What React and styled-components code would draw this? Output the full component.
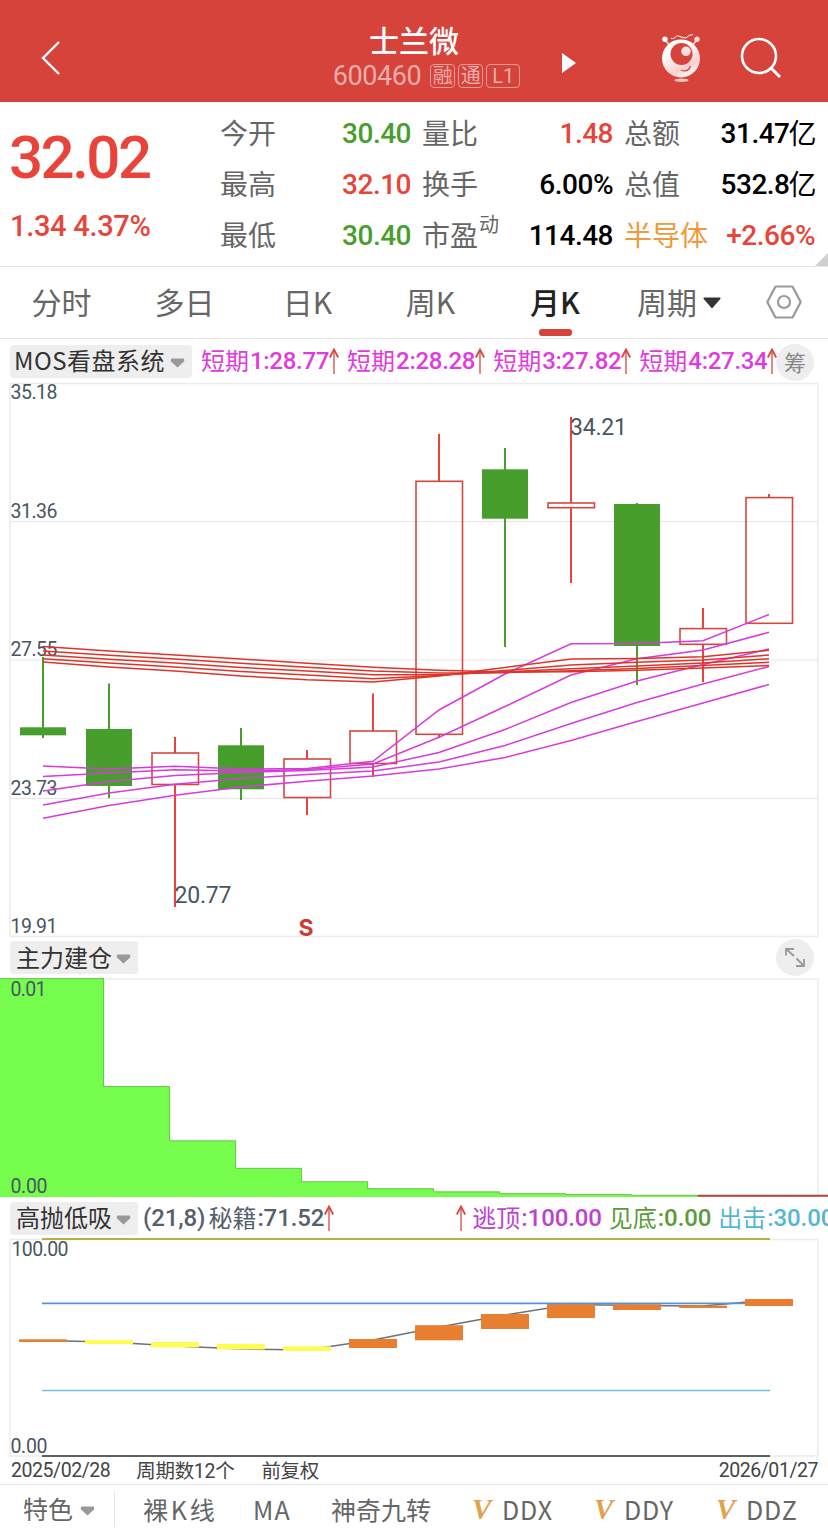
import styled, { createGlobalStyle } from 'styled-components';

const cjk = `'Noto Sans CJK SC', sans-serif`;
const din = `Roboto, 'Noto Sans CJK SC', sans-serif`;

const RED = '#e8443a';
const GREEN = '#479e2c';

const quotes = [
  [
    { label: '今开', value: '30.40', color: GREEN },
    { label: '最高', value: '32.10', color: RED },
    { label: '最低', value: '30.40', color: GREEN },
  ],
  [
    { label: '量比', value: '1.48', color: RED },
    { label: '换手', value: '6.00%' },
    { label: '市盈', sup: '动', value: '114.48' },
  ],
  [
    { label: '总额', value: '31.47', unit: '亿' },
    { label: '总值', value: '532.8', unit: '亿' },
    { label: '半导体', labelColor: '#ee9a3a', value: '+2.66%', color: RED },
  ],
];

const tabs = [
  { name: '分时', width: 123 },
  { name: '多日', width: 123 },
  { name: '日K', width: 123 },
  { name: '周K', width: 123 },
  { name: '月K', width: 126, active: true },
];

const shortTerm = [
  { name: '短期', value: '1:28.77' },
  { name: '短期', value: '2:28.28' },
  { name: '短期', value: '3:27.82' },
  { name: '短期', value: '4:27.34' },
];

// x of each monthly bar
const xs = [43, 109, 175, 241, 307, 373, 439, 505, 571, 637, 703, 769];

// high, body top, body bottom, low
const candles = [
  { up: false, y: [657, 727.3, 735.3, 738] },
  { up: false, y: [683.5, 729, 786, 798] },
  { up: true, y: [737, 753, 784.5, 907] },
  { up: false, y: [728, 745.3, 789.3, 800] },
  { up: true, y: [750, 759, 797.5, 815] },
  { up: true, y: [693.5, 731, 763.5, 777] },
  { up: true, y: [434, 481.3, 734.3, 738] },
  { up: false, y: [448, 469.3, 518.7, 647] },
  { up: true, y: [417, 503, 507.7, 583] },
  { up: false, y: [503, 504, 646, 685] },
  { up: true, y: [608, 628.6, 644.3, 682] },
  { up: true, y: [494, 497.6, 623.3, 623.3] },
];

const shortLines = [
  [766, 769, 766.3, 769, 768.5, 761.3, 710, 674, 643.7, 643.5, 640.7, 614.5],
  [776.5, 773, 769.7, 771, 769.5, 764, 737.3, 706.5, 675, 658.7, 650, 632.3],
  [791, 781.5, 775.5, 772.5, 770.5, 767, 752.5, 729.5, 702.5, 681, 664.5, 649],
  [805, 793, 784.3, 778.5, 774.5, 771, 762, 745.5, 723.5, 702.5, 684, 666.5],
  [818.3, 805.6, 795.2, 787, 781.3, 776, 769, 757.5, 740.5, 721.5, 703, 684.5],
];

const longLines = [
  [646.5, 651, 655, 659, 663.3, 667.3, 670.3, 672, 671.7, 670.3, 668, 665.5],
  [651, 655.3, 659, 663.3, 667.3, 671, 673, 672.7, 670.7, 668.5, 665.5, 662.3],
  [655, 659.3, 663, 667.5, 671, 674.8, 674.7, 672, 668.7, 666, 663, 658.8],
  [658.7, 663, 667, 671.5, 675, 678.7, 675.5, 670.5, 665, 662.3, 660, 655],
  [662, 667, 671, 676, 679.7, 681.9, 676, 667.5, 659, 658.5, 656.7, 650.3],
];

const volumes = [
  [0, 104, 978.3],
  [104, 66, 1086.3],
  [170, 66, 1140.6],
  [236, 66, 1168],
  [302, 66, 1181.5],
  [368, 66, 1188.4],
  [434, 66, 1191.6],
  [500, 66, 1193.4],
  [566, 66, 1194.3],
  [632, 66, 1195],
];

const blocks = [
  ['#e87f30', 1339.3, 1342],
  ['#fdfd55', 1340, 1344],
  ['#fdfd55', 1342, 1347.3],
  ['#fdfd55', 1344, 1349.5],
  ['#fdfd55', 1346.3, 1351],
  ['#e87f30', 1339, 1348],
  ['#e87f30', 1325.2, 1340.3],
  ['#e87f30', 1314, 1329],
  ['#e87f30', 1304, 1318],
  ['#e87f30', 1304.2, 1310],
  ['#e87f30', 1305.6, 1308],
  ['#e87f30', 1299, 1306],
];

const trend = [1340.5, 1342, 1346, 1349, 1350, 1340, 1327, 1315, 1304.5, 1305.5, 1306, 1300];

const toPoints = (ys) => ys.map((y, i) => `${xs[i]},${y}`).join(' ');

const GlobalStyle = createGlobalStyle`
  * {
    box-sizing: border-box;
  }
  body {
    margin: 0;
    background: #fff;
    font-family: ${cjk};
  }
`;

const Page = styled.div`
  width: 828px;
  height: 1530px;
  overflow: hidden;
  background: #fff;
  display: flex;
  flex-direction: column;
`;

const Header = styled.header`
  height: 102px;
  flex: none;
  display: flex;
  background: #d6433b;
  color: #fff;
`;

const HeaderIcon = styled.svg`
  display: block;
  flex: none;
  width: ${(p) => p.$w}px;
  height: ${(p) => p.$h}px;
  margin: ${(p) => p.$top}px 0 0 ${(p) => p.$left}px;
`;

const TitleBlock = styled.div`
  width: 288px;
  margin-left: 209px;
  display: flex;
  flex-direction: column;
  align-items: center;
`;

const Title = styled.div`
  margin-top: 20px;
  height: 38px;
  line-height: 38px;
  font-size: 30px;
  font-weight: 500;
`;

const CodeRow = styled.div`
  display: flex;
  align-items: center;
  height: 30px;
  margin-top: 3px;
  padding-left: 25px;
  color: #ebada9;
`;

const Code = styled.span`
  font-family: ${din};
  font-size: 27px;
  letter-spacing: -0.4px;
  margin-right: 9px;
`;

const Badge = styled.span`
  width: ${(p) => p.$w || 25}px;
  height: 24px;
  margin-right: ${(p) => (p.$last ? 0 : 3)}px;
  border: 1px solid #e79b96;
  border-radius: 4px;
  font-size: 20px;
  line-height: ${(p) => (p.$w ? 23 : 20)}px;
  text-align: center;
  font-family: ${(p) => (p.$w ? din : cjk)};
`;

const Quote = styled.section`
  position: relative;
  height: 165px;
  flex: none;
  display: flex;
  border-bottom: 1px solid #e6e6e6;
`;

const PriceBlock = styled.div`
  width: 220px;
  padding: 17px 0 0 9px;
  font-family: ${din};
  color: ${RED};
`;

const Price = styled.div`
  font-size: 60px;
  line-height: 78px;
  font-weight: 500;
  letter-spacing: -2.5px;
`;

const Change = styled.div`
  margin: 9px 0 0 1px;
  font-size: 29px;
  line-height: 40px;
  font-weight: 500;
  letter-spacing: -0.3px;
  white-space: pre;
`;

const QuoteColumn = styled.div`
  width: 191px;
  margin-right: 11px;
  padding-top: 6px;
`;

const QuoteItem = styled.div`
  height: 51px;
  display: flex;
  align-items: center;
  justify-content: space-between;
  white-space: nowrap;
`;

const QuoteLabel = styled.span`
  display: flex;
  margin-top: -4px;
  font-size: 28px;
  line-height: 50px;
  font-weight: 400;
  color: ${(p) => p.$color || '#666'};
`;

const Sup = styled.span`
  font-size: 20px;
  line-height: 30px;
  margin-left: 1px;
`;

const QuoteValue = styled.span`
  display: flex;
  align-items: center;
  font-family: ${din};
  font-size: 28px;
  line-height: 50px;
  font-weight: 500;
  letter-spacing: -0.5px;
  color: ${(p) => p.$color || '#000'};
`;

const Unit = styled.span`
  font-family: ${cjk};
  font-weight: 400;
  font-size: 28px;
  margin: -4px -1px 0 -1px;
`;

const Corner = styled.span`
  position: absolute;
  right: 0;
  bottom: 0;
  border-style: solid;
  border-width: 0 0 13px 13px;
  border-color: transparent transparent #cfcfcf transparent;
`;

const TabBar = styled.nav`
  height: 72px;
  flex: none;
  display: flex;
  border-bottom: 1px solid #e6e6e6;
`;

const Tab = styled.div`
  width: ${(p) => p.$w}px;
  display: flex;
  flex-direction: column;
  align-items: center;
  font-size: 30px;
  line-height: 68px;
  height: 71px;
  font-weight: ${(p) => (p.$active ? 500 : 400)};
  color: ${(p) => (p.$active ? '#222' : '#666')};
`;

const TabMark = styled.span`
  width: 33px;
  height: 7px;
  flex: none;
  margin-top: -6px;
  border-radius: 3px;
  background: #d6433b;
`;

const PeriodTab = styled.div`
  display: flex;
  align-items: center;
  width: 148px;
  padding-left: 19px;
  height: 68px;
  font-size: 30px;
  font-weight: 400;
  color: #666;
`;

const TabIcon = styled.svg`
  display: block;
  width: ${(p) => p.$w}px;
  height: ${(p) => p.$h}px;
  margin-left: ${(p) => p.$left || 0}px;
  margin-top: ${(p) => p.$top || 0}px;
`;

const IndicatorBar = styled.div`
  position: relative;
  height: ${(p) => p.$h}px;
  flex: none;
  display: flex;
  align-items: center;
  padding-left: 10px;
  overflow: hidden;
  white-space: nowrap;
`;

const Picker = styled.div`
  display: flex;
  align-items: center;
  flex: none;
  width: ${(p) => p.$w}px;
  height: 33px;
  padding-left: ${(p) => p.$pad || 6}px;
  border-radius: 4px;
  background: #eee;
  color: #333;
  font-size: 24px;
  line-height: 31px;
  font-weight: 400;
  letter-spacing: ${(p) => p.$ls || 0}px;
`;

const PickerText = styled.span`
  margin-top: -3px;
`;

const PickerArrow = styled.svg`
  display: block;
  width: 15px;
  height: 10px;
  margin: 3px 0 0 ${(p) => p.$left}px;
`;

const Reading = styled.span`
  display: flex;
  align-items: center;
  flex: none;
  margin-left: ${(p) => p.$left}px;
  font-size: 24px;
  line-height: 33px;
  color: ${(p) => p.$color};
`;

const Name = styled.span`
  font-family: ${cjk};
  font-weight: 400;
  margin: -3px 1px 0 ${(p) => p.$left || 0}px;
`;

const Num = styled.span`
  font-family: ${din};
  font-weight: 500;
  letter-spacing: ${(p) => p.$ls || -0.1}px;
`;

const ArrowUp = styled.svg`
  display: block;
  width: 10px;
  height: 26px;
`;

const RoundButton = styled.span`
  position: absolute;
  left: 776px;
  top: ${(p) => p.$top}px;
  width: 38px;
  height: 37px;
  display: flex;
  align-items: center;
  justify-content: center;
  border-radius: 50%;
  background: #eee;
  color: #888;
  font-size: 22px;
  line-height: 33px;
  padding-bottom: ${(p) => p.$pb || 0}px;
`;

const Chart = styled.svg`
  display: block;
  flex: none;
  width: 828px;
  height: ${(p) => p.$h}px;
  overflow: visible;
`;

const Axis = styled.text`
  font-family: ${din};
  font-size: ${(p) => p.$size || 19.5}px;
  font-weight: 400;
  fill: #485563;
`;

const Signal = styled.text`
  font-family: Inter, sans-serif;
  font-size: 23px;
  font-weight: 700;
  fill: #cc3c35;
`;

const DateRow = styled.div`
  height: 28px;
  flex: none;
  display: flex;
  align-items: center;
  padding: 0 10px 0 11px;
  font-family: ${din};
  font-size: 19.5px;
  font-weight: 400;
  color: #444;
  border-bottom: 1px solid #e6e6e6;
`;

const DateText = styled.span`
  letter-spacing: -0.45px;
  margin-left: ${(p) => p.$left || 0};
`;

const Note = styled.span`
  margin: -2px 0 0 ${(p) => p.$left}px;
  letter-spacing: -0.3px;
`;

const Footer = styled.footer`
  height: 45px;
  flex: none;
  display: flex;
  padding-top: 4px;
  font-size: 25px;
  line-height: 40px;
  font-weight: 400;
  color: #666;
  white-space: nowrap;
`;

const FootFirst = styled.div`
  display: flex;
  align-items: center;
  width: 115px;
  height: 36px;
  padding-left: 23px;
  border-right: 1px solid #e4e4e4;
  margin-top: 2px;
`;

const FootItem = styled.span`
  display: flex;
  margin-left: ${(p) => p.$left || 0}px;
  width: ${(p) => p.$w}px;
  letter-spacing: ${(p) => p.$ls || 0}px;
`;

const FootV = styled.span`
  width: 30px;
  font-family: 'Liberation Serif', serif;
  font-style: italic;
  font-weight: 700;
  font-size: 29px;
  letter-spacing: 0;
  color: #dfa34c;
`;

function Up() {
  return (
    <ArrowUp viewBox="0 0 10 26" fill="none" stroke="#d9473f">
      <path d="M5 1.5V26" strokeWidth="1.3" />
      <path d="M0.8 9.5L5 1.5L9.2 9.5" strokeWidth="1.8" />
    </ArrowUp>
  );
}

function Down({ left }) {
  return (
    <PickerArrow $left={left} viewBox="0 0 15 10">
      <path d="M1.5 0.5H13.5Q15 1.8 14 3.6L7.5 9.6L1 3.6Q0 1.8 1.5 0.5Z" fill="#999" />
    </PickerArrow>
  );
}

function Candle({ x, up, y }) {
  const [high, top, bottom, low] = y;
  if (!up) {
    return (
      <g fill="#479e2c" stroke="#479e2c">
        <path d={`M${x} ${high}V${low}`} strokeWidth="2" />
        <rect x={x - 23} y={top} width="46" height={bottom - top} stroke="none" />
      </g>
    );
  }
  return (
    <g fill="none">
      <path d={`M${x} ${high}V${top}M${x} ${bottom}V${low}`} stroke="#e8443c" strokeWidth="2" />
      <rect
        x={x - 23}
        y={top}
        width="46.5"
        height={bottom - top}
        stroke="#d6483f"
        strokeWidth="1.6"
      />
    </g>
  );
}

function HeaderBar() {
  return (
    <Header>
      <HeaderIcon $w={20} $h={36} $top={40} $left={41} viewBox="0 0 20 36">
        <path d="M18 2L2 18L18 34" fill="none" stroke="#fff" strokeWidth="2.4" />
      </HeaderIcon>
      <TitleBlock>
        <Title>士兰微</Title>
        <CodeRow>
          <Code>600460</Code>
          <Badge>融</Badge>
          <Badge>通</Badge>
          <Badge $w={34} $last>
            L1
          </Badge>
        </CodeRow>
      </TitleBlock>
      <HeaderIcon $w={14} $h={20} $top={53} $left={4} viewBox="0 0 14 20">
        <path d="M0 0L14 10L0 20Z" fill="#fff" />
      </HeaderIcon>
      <HeaderIcon $w={40} $h={50} $top={33} $left={85} viewBox="0 0 40 50">
        <defs>
          <linearGradient id="face" x1="0.2" y1="0" x2="0.7" y2="1">
            <stop offset="0.3" stopColor="#fff" />
            <stop offset="0.75" stopColor="#f8cfcd" />
            <stop offset="1" stopColor="#fff" />
          </linearGradient>
        </defs>
        <path d="M3.5 6L9 13M36.5 6L31 13" stroke="#fbe3e1" strokeWidth="1.4" />
        <circle cx="4" cy="6.2" r="2.7" fill="#fff" />
        <circle cx="36" cy="6.2" r="2.7" fill="#f9d9d7" />
        <path
          d="M10 5.5H13L16 2.5L20 4L25 5L28 2.5L32 1.5"
          fill="none"
          stroke="#fff"
          strokeWidth="1"
        />
        <circle cx="20" cy="25.4" r="19" fill="url(#face)" />
        <circle cx="20.5" cy="21" r="11" fill="#d6433b" />
        <circle cx="25" cy="18.3" r="4.8" fill="#fae0de" />
        <path d="M20 37.2Q27.5 39.5 29.5 33" fill="none" stroke="#d6433b" strokeWidth="1.2" />
        <ellipse cx="20.5" cy="47.3" rx="7" ry="1.7" fill="#f4bfbc" />
      </HeaderIcon>
      <HeaderIcon $w={42} $h={42} $top={37} $left={39} viewBox="0 0 42 42">
        <circle cx="19" cy="19" r="17" fill="none" stroke="#fff" strokeWidth="2.6" />
        <path d="M31 31L40 40" stroke="#fff" strokeWidth="3" />
      </HeaderIcon>
    </Header>
  );
}

export default function App() {
  return (
    <Page>
      <GlobalStyle />
      <HeaderBar />

      <Quote>
        <PriceBlock>
          <Price>32.02</Price>
          <Change>1.34 4.37%</Change>
        </PriceBlock>
        {quotes.map((column, i) => (
          <QuoteColumn key={i}>
            {column.map((item) => (
              <QuoteItem key={item.label}>
                <QuoteLabel $color={item.labelColor}>
                  {item.label}
                  {item.sup && <Sup>{item.sup}</Sup>}
                </QuoteLabel>
                <QuoteValue $color={item.color}>
                  {item.value}
                  {item.unit && <Unit>{item.unit}</Unit>}
                </QuoteValue>
              </QuoteItem>
            ))}
          </QuoteColumn>
        ))}
        <Corner />
      </Quote>

      <TabBar>
        {tabs.map((tab) => (
          <Tab key={tab.name} $w={tab.width} $active={tab.active}>
            {tab.name}
            {tab.active && <TabMark />}
          </Tab>
        ))}
        <PeriodTab>
          周期
          <TabIcon $w={18} $h={12} $left={6} $top={3} viewBox="0 0 18 12">
            <path d="M1 0.5H17Q18 1 17.3 2L9 11.5L0.7 2Q0 1 1 0.5Z" fill="#333" />
          </TabIcon>
        </PeriodTab>
        <TabIcon $w={36} $h={34} $top={18} viewBox="0 0 36 34" fill="none" stroke="#999" strokeWidth="2.2">
          <path d="M9.5 1.5H26.5L34.7 17L26.5 32.5H9.5L1.3 17Z" strokeLinejoin="round" />
          <circle cx="18" cy="17" r="6" />
        </TabIcon>
      </TabBar>

      <IndicatorBar $h={44}>
        <Picker $w={182} $pad={4} $ls={0.5}>
          <PickerText>MOS看盘系统</PickerText>
          <Down left={5} />
        </Picker>
        {shortTerm.map((item, i) => (
          <Reading key={item.value} $left={i === 0 ? 9 : 8} $color="#e03bdc">
            <Name>{item.name}</Name>
            <Num $ls={-0.3}>{item.value}</Num>
            <Up />
          </Reading>
        ))}
        <RoundButton $top={5} $pb={3}>
          筹
        </RoundButton>
      </IndicatorBar>

      <Chart $h={554} viewBox="0 383 828 554">
        <path d="M10 383.5H818V936.5H10Z" fill="none" stroke="#ececec" strokeWidth="1.5" />
        <path d="M10 521.5H818M10 660H818M10 798.5H818" stroke="#e6e6e6" />
        <Axis x="10.5" y="399" textLength="47">35.18</Axis>
        <Axis x="10.5" y="518" textLength="47">31.36</Axis>
        <Axis x="10.5" y="656" textLength="47">27.55</Axis>
        <Axis x="10.5" y="795" textLength="47">23.73</Axis>
        <Axis x="10.5" y="933" textLength="47">19.91</Axis>
        {candles.map((c, i) => (
          <Candle key={xs[i]} x={xs[i]} up={c.up} y={c.y} />
        ))}
        {shortLines.map((ys, i) => (
          <polyline key={i} points={toPoints(ys)} fill="none" stroke="#d63bdb" strokeWidth="1.5" />
        ))}
        {longLines.map((ys, i) => (
          <polyline key={i} points={toPoints(ys)} fill="none" stroke="#dc352b" strokeWidth="1.5" />
        ))}
        <Axis $size={23} x="570" y="435" textLength="57">34.21</Axis>
        <Axis $size={23} x="174.5" y="903" textLength="57">20.77</Axis>
        <Signal x="298.5" y="935.5">S</Signal>
      </Chart>

      <IndicatorBar $h={41}>
        <Picker $w={128}>
          <PickerText>主力建仓</PickerText>
          <Down left={4} />
        </Picker>
        <RoundButton $top={2}>
          <svg width="20" height="19" viewBox="0 0 20 19" fill="none" stroke="#999" strokeWidth="1.8">
            <path d="M1 7.5V1H9M1 1L9 8M19 11V18H11M19 18L11.5 10.5" />
          </svg>
        </RoundButton>
      </IndicatorBar>

      <Chart $h={219} viewBox="0 978 828 219">
        <path d="M10 979H818V1196H10Z" fill="none" stroke="#ececec" strokeWidth="1.5" />
        {volumes.map(([x, w, y]) => (
          <g key={x}>
            <rect x={x} y={y} width={w} height={1197 - y} fill="#75fc4d" />
            <path d={`M${x} ${y + 0.3}H${x + w - 0.4}V1197`} fill="none" stroke="#65b54a" strokeWidth="0.8" />
          </g>
        ))}
        {volumes.slice(0, -1).map(([x, w], i) => (
          <rect
            key={x}
            x={x + w - 1}
            y={volumes[i + 1][2] + 0.7}
            width="2"
            height={1196.3 - volumes[i + 1][2]}
            fill="#75fc4d"
          />
        ))}
        <path d="M698 1195.8H828" stroke="#b5413b" strokeWidth="2" />
        <Axis x="10.5" y="995.5" textLength="36">0.01</Axis>
        <Axis x="10.5" y="1193" textLength="37">0.00</Axis>
      </Chart>

      <IndicatorBar $h={42}>
        <Picker $w={128}>
          <PickerText>高抛低吸</PickerText>
          <Down left={4} />
        </Picker>
        <Reading $left={5} $color="#56606b">
          <Num>(21,8)</Num>
          <Name $left={3}>秘籍</Name>
          <Num>:71.52</Num>
          <Up />
        </Reading>
        <Reading $left={122} $color="#bd42cf">
          <Up />
          <Name $left={6}>逃顶</Name>
          <Num>:100.00</Num>
        </Reading>
        <Reading $left={7} $color="#5a9c39">
          <Name>见底</Name>
          <Num>:0.00</Num>
        </Reading>
        <Reading $left={7} $color="#55b6d4">
          <Name>出击</Name>
          <Num>:30.00</Num>
        </Reading>
      </IndicatorBar>

      <Chart $h={218} viewBox="0 1239 828 218">
        <path d="M10 1239.5H818V1456H10Z" fill="none" stroke="#ececec" strokeWidth="1.5" />
        <path d="M42 1239H770" stroke="#bfae3f" strokeWidth="2" />
        <path d="M42 1390.5H770" stroke="#6cc3d2" strokeWidth="1.4" />
        <path d="M42 1456H770" stroke="#56635f" strokeWidth="2" />
        <polyline points={toPoints(trend)} fill="none" stroke="#6d7178" strokeWidth="1.5" />
        {blocks.map(([color, top, bottom], i) => (
          <rect key={xs[i]} x={xs[i] - 24} y={top} width="48" height={bottom - top} fill={color} />
        ))}
        <path d="M42 1303.4H770" stroke="#5b93d8" strokeWidth="1.6" />
        <rect x="745" y="1299" width="48" height="7" fill="#e87f30" />
        <Axis x="11.5" y="1255.5" textLength="57">100.00</Axis>
        <Axis x="10.5" y="1453" textLength="37">0.00</Axis>
      </Chart>

      <DateRow>
        <DateText>2025/02/28</DateText>
        <Note $left={26}>周期数12个</Note>
        <Note $left={27}>前复权</Note>
        <DateText $left="auto">2026/01/27</DateText>
      </DateRow>

      <Footer>
        <FootFirst>
          <PickerText>特色</PickerText>
          <Down left={7} />
        </FootFirst>
        <FootItem $left={28} $w={110} $ls={2.8}>
          裸K线
        </FootItem>
        <FootItem $w={78} $ls={1.2}>
          MA
        </FootItem>
        <FootItem $w={141}>神奇九转</FootItem>
        <FootItem $w={122} $ls={0.9}>
          <FootV>V</FootV>DDX
        </FootItem>
        <FootItem $w={122} $ls={0.9}>
          <FootV>V</FootV>DDY
        </FootItem>
        <FootItem $w={100} $ls={0.9}>
          <FootV>V</FootV>DDZ
        </FootItem>
      </Footer>
    </Page>
  );
}
